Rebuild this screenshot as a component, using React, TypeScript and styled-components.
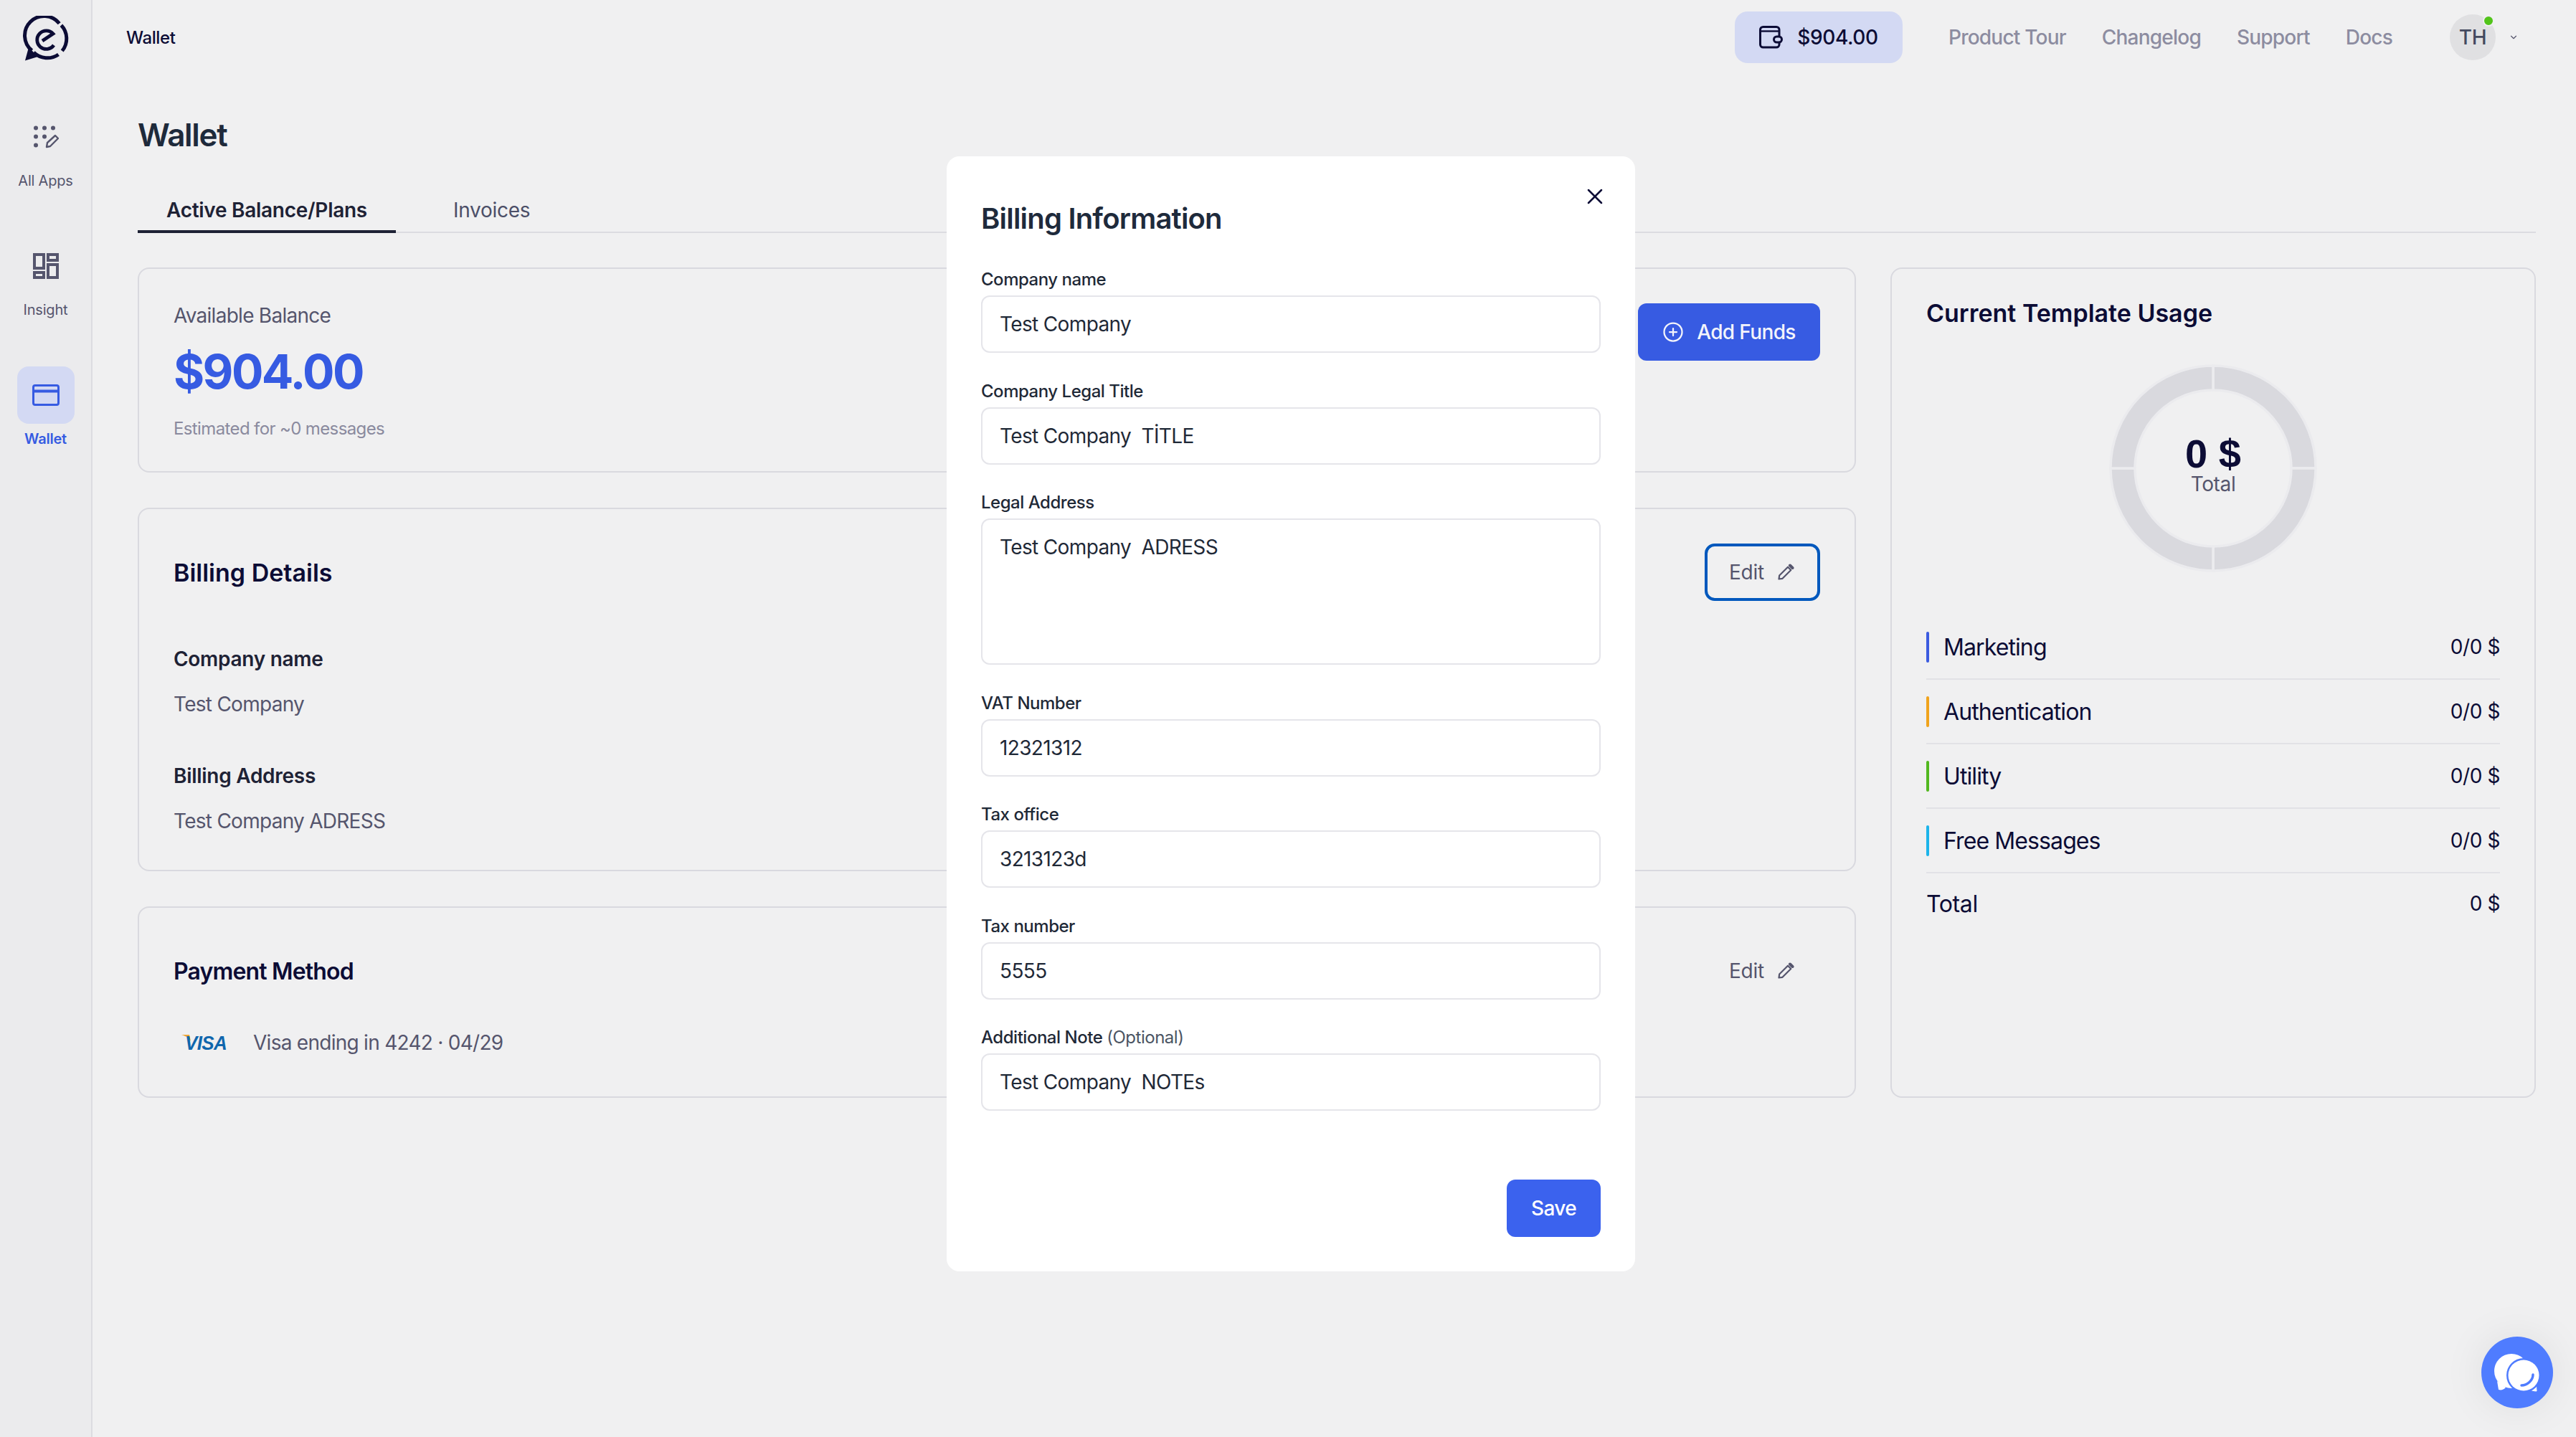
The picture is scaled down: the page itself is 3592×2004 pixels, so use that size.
import React from 'react'
import styled, { createGlobalStyle } from 'styled-components'
import { CirclePlus, X, ChevronDown } from 'lucide-react'

const GlobalStyle = createGlobalStyle`
    html, body {
        margin: 0;
        padding: 0;
        height: 100%;
        background: #f0f0f1;
        overflow: hidden;
    }
    * {
        box-sizing: border-box;
    }
    body {
        font-family: Inter, "Liberation Sans", sans-serif;
        color: #0c0c35;
        letter-spacing: -0.023em;
    }
    input, textarea, button {
        letter-spacing: -0.023em;
    }
`

const Shell = styled.div`
    display: flex;
    height: 2004px;
`

const Sidebar = styled.aside`
    width: 129px;
    flex: none;
    background: #ebebed;
    border-right: 2px solid #dcdce1;
    display: flex;
    flex-direction: column;
    align-items: center;
    padding-top: 22px;
`

const LogoBox = styled.div`
    height: 64px;
    margin-bottom: 65px;
`

const NavItem = styled.div`
    display: flex;
    flex-direction: column;
    align-items: center;
    margin-bottom: 66px;
`

const NavTile = styled.div<{ $active?: boolean }>`
    width: 80px;
    height: 80px;
    border-radius: 16px;
    display: flex;
    align-items: center;
    justify-content: center;
    background: ${p => (p.$active ? '#d3d9f3' : 'transparent')};
    color: ${p => (p.$active ? '#365be2' : '#55556d')};
`

const NavLabel = styled.div<{ $active?: boolean }>`
    margin-top: 8px;
    font-size: 20px;
    line-height: 26px;
    letter-spacing: -0.01em;
    font-weight: ${p => (p.$active ? 600 : 400)};
    color: ${p => (p.$active ? '#365be2' : '#55556d')};
`

const Main = styled.main`
    flex: 1;
    min-width: 0;
    padding-right: 56px;
`

const TopBar = styled.header`
    height: 104px;
    display: flex;
    align-items: center;
    padding-left: 47px;
`

const Crumb = styled.div`
    font-size: 24px;
    font-weight: 500;
    color: #0c0c35;
    margin-right: auto;
`

const BalanceChip = styled.div`
    width: 234px;
    height: 72px;
    border-radius: 18px;
    background: #d3d9f3;
    display: flex;
    align-items: center;
    justify-content: center;
    gap: 20px;
    font-size: 28px;
    font-weight: 500;
    color: #0c0c35;
    margin-right: 64px;
`

const TopLink = styled.div`
    font-size: 28px;
    font-weight: 500;
    letter-spacing: -0.028em;
    color: #8c8ca0;
    margin-right: 50px;
`

const Avatar = styled.div`
    position: relative;
    width: 64px;
    height: 64px;
    border-radius: 50%;
    background: #e0e0e2;
    display: flex;
    align-items: center;
    justify-content: center;
    font-size: 28px;
    font-weight: 500;
    color: #444a60;
    margin-left: 30px;
`

const StatusDot = styled.span`
    position: absolute;
    top: 1px;
    right: 2px;
    width: 16px;
    height: 16px;
    border-radius: 50%;
    background: #52c41a;
    border: 2px solid #f0f0f1;
`

const Caret = styled.div`
    display: flex;
    color: #55556d;
    margin-left: 18px;
    margin-right: 24px;
`

const Content = styled.div`
    padding-left: 63px;
`

const PageTitle = styled.h1`
    margin: 58px 0 0;
    font-size: 44px;
    line-height: 52px;
    letter-spacing: -0.03em;
    font-weight: 600;
    color: #1e2a3b;
`

const TabRow = styled.div`
    display: flex;
    gap: 40px;
    margin-top: 47px;
    border-bottom: 2px solid #dcdce1;
`

const Tab = styled.div<{ $active?: boolean }>`
    height: 64px;
    margin-bottom: -2px;
    padding: 14px 40px 0;
    font-size: 28px;
    line-height: 36px;
    letter-spacing: -0.01em;
    font-weight: ${p => (p.$active ? 600 : 400)};
    color: ${p => (p.$active ? '#1e2235' : '#4c4f68')};
    border-bottom: 4px solid ${p => (p.$active ? '#1e2235' : 'transparent')};
`

const Columns = styled.div`
    display: grid;
    grid-template-columns: 2396px 900px;
    column-gap: 48px;
    margin-top: 48px;
`

const Stack = styled.div`
    display: flex;
    flex-direction: column;
    gap: 49px;
`

const Card = styled.section`
    border: 2px solid #d9d9df;
    border-radius: 16px;
    padding: 48px;
`

const BalanceCard = styled(Card)`
    display: flex;
    justify-content: space-between;
    align-items: flex-start;
    padding-bottom: 43px;
`

const DetailsCard = styled(Card)`
    padding-bottom: 50px;
`

const Muted = styled.div`
    font-size: 28px;
    line-height: 34px;
    letter-spacing: -0.026em;
    color: #55556d;
`

const Amount = styled.div`
    margin-top: 21px;
    font-size: 66px;
    line-height: 80px;
    letter-spacing: -2.6px;
    font-weight: 700;
    color: #365be2;
`

const Estimate = styled.div`
    margin-top: 24px;
    font-size: 24px;
    line-height: 32px;
    letter-spacing: -0.026em;
    color: #8a8a9e;
`

const PrimaryButton = styled.button`
    display: flex;
    align-items: center;
    justify-content: center;
    white-space: nowrap;
    border: none;
    height: 80px;
    border-radius: 12px;
    background: #375be2;
    color: #f3f4fb;
    font-family: inherit;
    font-size: 28px;
    font-weight: 500;
`

const AddFunds = styled(PrimaryButton)`
    width: 254px;
    padding: 0;
    gap: 18px;
`

const CardHead = styled.div`
    display: flex;
    align-items: center;
    justify-content: space-between;
`

const CardTitle = styled.h2<{ $large?: boolean }>`
    margin: 0;
    font-size: ${p => (p.$large ? 34 : 32)}px;
    letter-spacing: ${p => (p.$large ? '0' : '-0.026em')};
    font-weight: 600;
    color: #0c0c35;
`

const EditButton = styled.button<{ $focused?: boolean }>`
    display: flex;
    align-items: center;
    gap: 18px;
    width: 161px;
    height: 80px;
    padding: 0 30px;
    background: transparent;
    border: 4px solid ${p => (p.$focused ? '#0058bd' : 'transparent')};
    border-radius: 14px;
    font-family: inherit;
    font-size: 28px;
    letter-spacing: -0.01em;
    color: #55556d;
`

const Details = styled.div`
    margin-top: 63px;
    display: flex;
    flex-direction: column;
`

const DetailLabel = styled.div`
    font-size: 28px;
    line-height: 36px;
    letter-spacing: -0.01em;
    font-weight: 600;
    color: #1e2235;
`

const DetailValue = styled.div`
    margin-top: 27px;
    margin-bottom: 64px;
    font-size: 28px;
    line-height: 36px;
    letter-spacing: -0.026em;
    color: #55556d;
    &:last-child {
        margin-bottom: 0;
    }
`

const PaymentCard = styled(Card)`
    padding-bottom: 55px;
`

const CardLine = styled.div`
    margin-top: 40px;
    padding-left: 11px;
    height: 40px;
    display: flex;
    align-items: center;
    gap: 36px;
    font-size: 28px;
    letter-spacing: -0.026em;
    color: #55556d;
`

const UsageCard = styled(Card)`
    padding-top: 40px;
`

const UsageTitle = styled.h2`
    margin: 0;
    font-size: 34px;
    line-height: 44px;
    letter-spacing: 0;
    font-weight: 600;
    color: #0c0c35;
`

const Donut = styled.div`
    position: relative;
    width: 296px;
    height: 296px;
    margin: 46px auto 57px;
`

const DonutCenter = styled.div`
    position: absolute;
    inset: 0;
    display: flex;
    flex-direction: column;
    align-items: center;
    justify-content: center;
    padding-bottom: 8px;
`

const DonutValue = styled.div`
    font-family: "Liberation Sans", Arial, sans-serif;
    font-size: 56px;
    line-height: 52px;
    letter-spacing: 0;
    font-weight: 700;
    color: #0c0c35;
`

const DonutCaption = styled.div`
    font-size: 28px;
    line-height: 32px;
    color: #55556d;
`

const UsageRow = styled.div`
    display: flex;
    align-items: center;
    height: 90px;
    border-bottom: 2px solid #e2e2e6;
`

const UsageBar = styled.span<{ $color: string }>`
    width: 4px;
    height: 43px;
    border-radius: 2px;
    margin-right: 20px;
    background: ${p => p.$color};
`

const UsageName = styled.div`
    flex: 1;
    font-size: 32px;
    letter-spacing: -0.028em;
    color: #0c0c35;
`

const UsageValue = styled.div`
    font-size: 28px;
    letter-spacing: -0.015em;
    color: #0c0c35;
`

const TotalRow = styled.div`
    display: flex;
    align-items: center;
    justify-content: space-between;
    height: 84px;
    font-size: 32px;
    color: #0c0c35;
`

const Backdrop = styled.div`
    position: fixed;
    inset: 0;
    display: flex;
    justify-content: center;
    align-items: flex-start;
    padding: 218px 0 0 8px;
`

const Modal = styled.form`
    position: relative;
    width: 960px;
    background: #fff;
    border-radius: 18px;
    padding: 0 48px 48px 48px;
`

const CloseButton = styled.div`
    position: absolute;
    top: 38px;
    right: 38px;
    display: flex;
    color: #0c0c35;
`

const ModalTitle = styled.h2`
    margin: 61px 0 43px;
    font-size: 40px;
    line-height: 52px;
    letter-spacing: -0.02em;
    font-weight: 600;
    color: #1e2a3b;
`

const Field = styled.div`
    margin-bottom: 37.5px;
`

const FieldLabel = styled.label`
    display: block;
    font-size: 24px;
    line-height: 32px;
    letter-spacing: -0.02em;
    font-weight: 500;
    color: #1f2937;
    margin-bottom: 6px;
`

const Optional = styled.span`
    font-weight: 400;
    color: #4b5563;
`

const TextInput = styled.input`
    display: block;
    width: 100%;
    height: 80px;
    padding: 0 24px;
    border: 2px solid #e5e5ea;
    border-radius: 12px;
    background: #fff;
    font-family: inherit;
    font-size: 28px;
    color: #1f2937;
    outline: none;
`

const TextArea = styled.textarea`
    display: block;
    width: 100%;
    height: 204px;
    padding: 20px 24px;
    border: 2px solid #e5e5ea;
    border-radius: 12px;
    background: #fff;
    font-family: inherit;
    font-size: 28px;
    line-height: 36px;
    color: #1f2937;
    outline: none;
    resize: none;
`

const ModalFoot = styled.div`
    display: flex;
    justify-content: flex-end;
    margin-top: 96px;
`

const SaveButton = styled(PrimaryButton)`
    width: 131px;
    padding: 0;
    background: #3b62ee;
    color: #fff;
`

const ChatFab = styled.div`
    position: fixed;
    left: 3460px;
    top: 1864px;
    width: 100px;
    height: 100px;
    border-radius: 50%;
    background: #4f7cff;
    box-shadow: 0 0 60px rgba(0, 0, 0, 0.08);
`

const Logo = () => (
    <svg width="64" height="64" viewBox="0 0 64 64" fill="none" stroke="#0c0c35" strokeWidth="5">
        <path d="M50.7 10.8A27 27 0 1 0 12.5 48.5" />
        <path d="M8 44L3 62.5L21 57Z" fill="#0c0c35" stroke="none" />
        <path d="M15 51A27 27 0 0 0 49.5 54" />
        <path d="M53.4 13.3A27 27 0 0 1 54.7 49" />
        <path d="M27 35L42 25A12.8 12.8 0 1 0 43 41" strokeWidth="4.8" />
    </svg>
)

const AppsIcon = () => (
    <svg width="36" height="32" viewBox="0 0 36 32" fill="currentColor">
        <circle cx="4" cy="3.5" r="3" />
        <circle cx="16" cy="3.5" r="3" />
        <circle cx="28" cy="3.5" r="3" />
        <circle cx="4" cy="15.5" r="3" />
        <circle cx="16" cy="15.5" r="3" />
        <circle cx="4" cy="27.5" r="3" />
        <path d="M19 30l1-6L31 14l4 4-11 11z" fill="none" stroke="currentColor" strokeWidth="2.4" strokeLinejoin="round" />
    </svg>
)

const InsightIcon = () => (
    <svg width="36" height="36" viewBox="0 0 36 36" fill="none" stroke="currentColor" strokeWidth="4">
        <rect x="2" y="2" width="13" height="19" />
        <rect x="21" y="2" width="13" height="8" />
        <rect x="21" y="16" width="13" height="18" />
        <rect x="2" y="27" width="13" height="7" />
    </svg>
)

const CardIcon = () => (
    <svg width="38" height="30" viewBox="0 0 38 30" fill="none" stroke="currentColor" strokeWidth="3">
        <rect x="1.5" y="1.5" width="35" height="27" rx="2.5" />
        <path d="M1.5 9.5h35" strokeWidth="4" />
    </svg>
)

const WalletIcon = () => (
    <svg width="33" height="32" viewBox="0 0 33 32" fill="none" stroke="#0c0c35" strokeWidth="3">
        <rect x="1.5" y="1.5" width="26.5" height="28.5" rx="4" />
        <path d="M1.5 7.5H28" strokeWidth="2.4" />
        <rect x="20.5" y="15" width="11" height="8" rx="4" fill="#d3d9f3" />
    </svg>
)

const PencilIcon = () => (
    <svg width="24" height="24" viewBox="0 0 24 24" fill="none" stroke="#55556d" strokeWidth="2.2">
        <path d="M2.5 21.5l.7-5L15 4.7l4.3 4.3L7.5 20.8z" strokeLinejoin="round" />
        <path d="M18 2.5l3.5 3.5" strokeWidth="4" strokeLinecap="round" />
    </svg>
)

const VisaLogo = () => (
    <svg width="64" height="24" viewBox="0 0 64 24">
        <path d="M0 1h11l2 9C11 6 6 3 0 1z" fill="#eda635" />
        <text x="5" y="22" fontFamily="'Liberation Sans', sans-serif" fontSize="28" fontWeight="700" fontStyle="italic" fill="#0f66ad" textLength="58" lengthAdjust="spacingAndGlyphs">VISA</text>
    </svg>
)

const ChatIcon = () => (
    <svg width="100" height="100" viewBox="0 0 100 100">
        <circle cx="42" cy="48" r="24" fill="#fff" />
        <path d="M22 62l2 12c4 1 7 0 10-3z" fill="#fff" />
        <path d="M76 62l1 14c-4 0-8-1-12-4z" fill="#fff" stroke="#fff" />
        <circle cx="59" cy="54" r="24" fill="#4f7cff" />
        <circle cx="59" cy="54" r="21.5" fill="#fff" />
        <path d="M72 53c0 8-8 15-16 15" fill="none" stroke="#4f7cff" strokeWidth="3.5" strokeLinecap="round" />
    </svg>
)

const polar = (r: number, deg: number) => {
    const a = (deg * Math.PI) / 180
    return `${148 + r * Math.sin(a)} ${148 - r * Math.cos(a)}`
}

const quadrant = (start: number) =>
    `M${polar(143, start)}A143 143 0 0 1 ${polar(143, start + 90)}L${polar(109, start + 90)}A109 109 0 0 0 ${polar(109, start)}Z`

const DonutChart = () => (
    <svg width="296" height="296" viewBox="0 0 296 296">
        {[0, 90, 180, 270].map(start => (
            <path key={start} d={quadrant(start)} fill="#d9d9de" stroke="#ebebee" strokeWidth="3.5" />
        ))}
    </svg>
)

const navItems = [
    { label: 'All Apps', icon: <AppsIcon /> },
    { label: 'Insight', icon: <InsightIcon /> },
    { label: 'Wallet', icon: <CardIcon />, active: true },
]

const usage = [
    { name: 'Marketing', color: '#3b5be0' },
    { name: 'Authentication', color: '#f0a31c' },
    { name: 'Utility', color: '#52b81f' },
    { name: 'Free Messages', color: '#1cb4ea' },
]

const App = () => {
    return (
        <>
            <GlobalStyle />
            <Shell>
                <Sidebar>
                    <LogoBox>
                        <Logo />
                    </LogoBox>
                    {navItems.map(item => (
                        <NavItem key={item.label}>
                            <NavTile $active={item.active}>{item.icon}</NavTile>
                            <NavLabel $active={item.active}>{item.label}</NavLabel>
                        </NavItem>
                    ))}
                </Sidebar>
                <Main>
                    <TopBar>
                        <Crumb>Wallet</Crumb>
                        <BalanceChip>
                            <WalletIcon />
                            $904.00
                        </BalanceChip>
                        <TopLink>Product Tour</TopLink>
                        <TopLink>Changelog</TopLink>
                        <TopLink>Support</TopLink>
                        <TopLink>Docs</TopLink>
                        <Avatar>
                            TH
                            <StatusDot />
                        </Avatar>
                        <Caret>
                            <ChevronDown size={14} strokeWidth={2} />
                        </Caret>
                    </TopBar>
                    <Content>
                        <PageTitle>Wallet</PageTitle>
                        <TabRow>
                            <Tab $active>Active Balance/Plans</Tab>
                            <Tab>Invoices</Tab>
                        </TabRow>
                        <Columns>
                            <Stack>
                                <BalanceCard>
                                    <div>
                                        <Muted>Available Balance</Muted>
                                        <Amount>$904.00</Amount>
                                        <Estimate>Estimated for ~0 messages</Estimate>
                                    </div>
                                    <AddFunds type="button">
                                        <CirclePlus size={30} strokeWidth={1.8} />
                                        Add Funds
                                    </AddFunds>
                                </BalanceCard>
                                <DetailsCard>
                                    <CardHead>
                                        <CardTitle $large>Billing Details</CardTitle>
                                        <EditButton type="button" $focused>
                                            Edit
                                            <PencilIcon />
                                        </EditButton>
                                    </CardHead>
                                    <Details>
                                        <DetailLabel>Company name</DetailLabel>
                                        <DetailValue>Test Company</DetailValue>
                                        <DetailLabel>Billing Address</DetailLabel>
                                        <DetailValue>Test Company ADRESS</DetailValue>
                                    </Details>
                                </DetailsCard>
                                <PaymentCard>
                                    <CardHead>
                                        <CardTitle>Payment Method</CardTitle>
                                        <EditButton type="button">
                                            Edit
                                            <PencilIcon />
                                        </EditButton>
                                    </CardHead>
                                    <CardLine>
                                        <VisaLogo />
                                        Visa ending in 4242 · 04/29
                                    </CardLine>
                                </PaymentCard>
                            </Stack>
                            <UsageCard>
                                <UsageTitle>Current Template Usage</UsageTitle>
                                <Donut>
                                    <DonutChart />
                                    <DonutCenter>
                                        <DonutValue>0 $</DonutValue>
                                        <DonutCaption>Total</DonutCaption>
                                    </DonutCenter>
                                </Donut>
                                {usage.map(row => (
                                    <UsageRow key={row.name}>
                                        <UsageBar $color={row.color} />
                                        <UsageName>{row.name}</UsageName>
                                        <UsageValue>0/0 $</UsageValue>
                                    </UsageRow>
                                ))}
                                <TotalRow>
                                    Total
                                    <UsageValue>0 $</UsageValue>
                                </TotalRow>
                            </UsageCard>
                        </Columns>
                    </Content>
                </Main>
            </Shell>
            <Backdrop>
                <Modal>
                    <CloseButton>
                        <X size={36} strokeWidth={1.7} />
                    </CloseButton>
                    <ModalTitle>Billing Information</ModalTitle>
                    <Field>
                        <FieldLabel>Company name</FieldLabel>
                        <TextInput defaultValue="Test Company" />
                    </Field>
                    <Field>
                        <FieldLabel>Company Legal Title</FieldLabel>
                        <TextInput defaultValue="Test Company  TİTLE" />
                    </Field>
                    <Field>
                        <FieldLabel>Legal Address</FieldLabel>
                        <TextArea defaultValue="Test Company  ADRESS" />
                    </Field>
                    <Field>
                        <FieldLabel>VAT Number</FieldLabel>
                        <TextInput defaultValue="12321312" />
                    </Field>
                    <Field>
                        <FieldLabel>Tax office</FieldLabel>
                        <TextInput defaultValue="3213123d" />
                    </Field>
                    <Field>
                        <FieldLabel>Tax number</FieldLabel>
                        <TextInput defaultValue="5555" />
                    </Field>
                    <Field>
                        <FieldLabel>
                            Additional Note <Optional>(Optional)</Optional>
                        </FieldLabel>
                        <TextInput defaultValue="Test Company  NOTEs" />
                    </Field>
                    <ModalFoot>
                        <SaveButton type="button">Save</SaveButton>
                    </ModalFoot>
                </Modal>
            </Backdrop>
            <ChatFab>
                <ChatIcon />
            </ChatFab>
        </>
    )
}

export default App
